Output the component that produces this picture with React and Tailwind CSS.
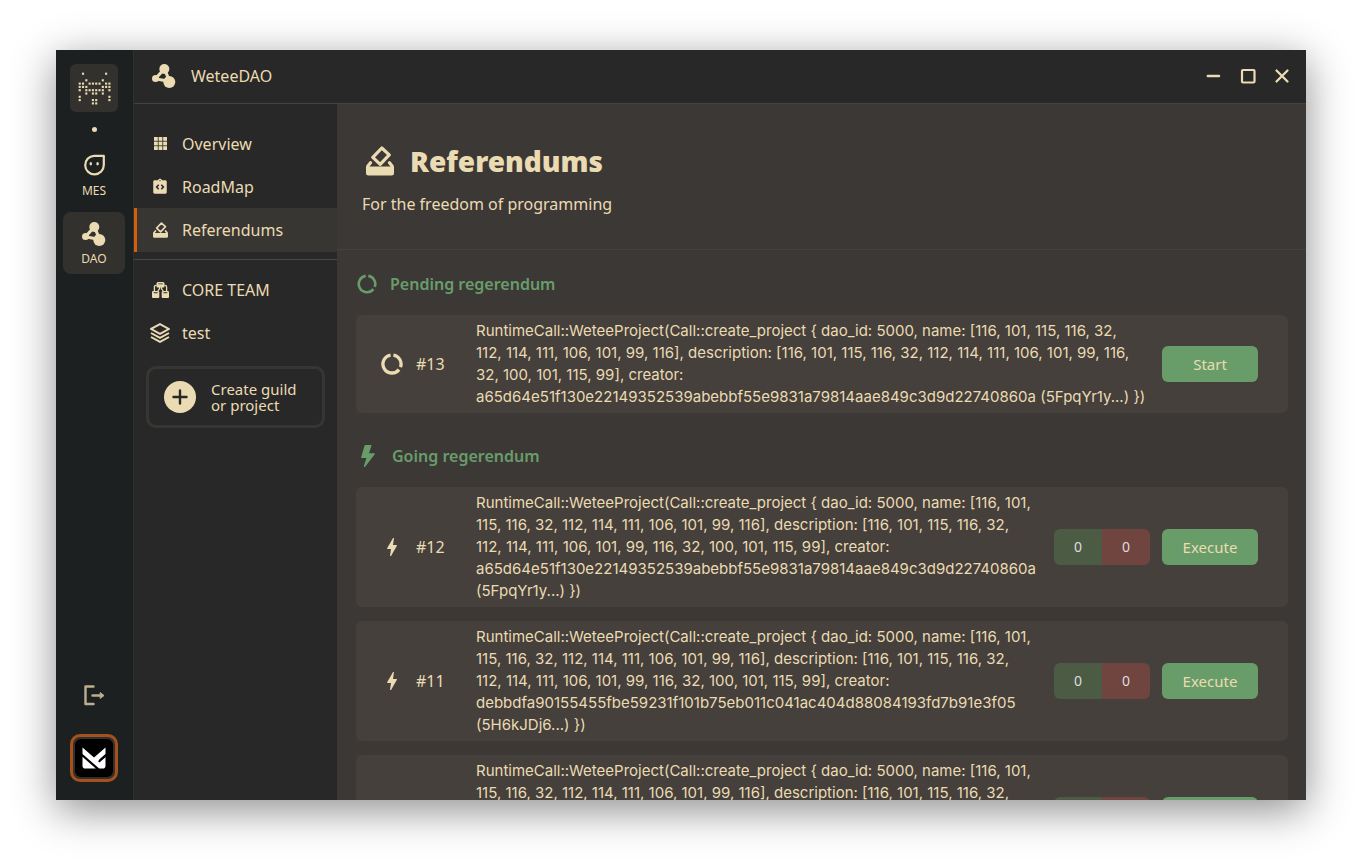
import React from "react";
import { BsLightningFill } from "react-icons/bs";
import { MdIntegrationInstructions, MdBolt } from "react-icons/md";
import { BiLayer } from "react-icons/bi";

const LOGO_ROWS = [
  [1, 8],
  [],
  [2, 7],
  [0, 1, 3, 4, 5, 6, 8, 9],
  [0, 1, 2, 7, 8, 9],
  [0, 2, 3, 4, 5, 6, 7, 9],
  [2, 4, 5, 7],
  [0, 9],
  [0, 4, 5, 9],
  [4, 5],
];

function PixelLogo() {
  return (
    <svg viewBox="0 0 100 100" className="size-[33px]" fill="currentColor" aria-hidden="true">
      {LOGO_ROWS.flatMap((row, y) =>
        row.map((x) => <rect key={`${x}-${y}`} x={x * 10 + 2} y={y * 10 + 2} width="6.4" height="6.4" />)
      )}
    </svg>
  );
}

function FaceIcon() {
  return (
    <svg viewBox="0 0 22 22" className="size-[22px]" fill="none" stroke="currentColor" strokeWidth="2.2" aria-hidden="true">
      <path d="M11 1.8H20.8V11A9.3 9.3 0 1 1 11 1.8Z" strokeLinejoin="round" />
      <ellipse cx="7.8" cy="9.8" rx="1.3" ry="1.8" fill="currentColor" stroke="none" />
      <ellipse cx="14.6" cy="9.8" rx="1.3" ry="1.8" fill="currentColor" stroke="none" />
    </svg>
  );
}

function NodesIcon() {
  return (
    <svg viewBox="0 0 24 24" className="size-6" fill="currentColor" aria-hidden="true">
      <circle cx="12.3" cy="5" r="5" />
      <circle cx="3.5" cy="14.5" r="3.5" />
      <circle cx="17.3" cy="18" r="6" />
      <path d="M10 7.5 4.5 13.5M4.5 15l9.5 1.8M13.8 8l2.4 6" fill="none" stroke="currentColor" strokeWidth="3.2" />
    </svg>
  );
}

function GridIcon() {
  return (
    <svg viewBox="0 0 13 13" className="size-[13px]" fill="currentColor" aria-hidden="true">
      {[0, 4.6, 9.2].flatMap((y) => [0, 4.6, 9.2].map((x) => <rect key={`${x}-${y}`} x={x} y={y} width="3.8" height="3.8" />))}
    </svg>
  );
}

function VoteIcon({ className }) {
  return (
    <svg viewBox="0 0 28 30" className={className} fill="none" stroke="currentColor" strokeLinejoin="round" strokeLinecap="round" aria-hidden="true">
      <path d="M15.8 2 23.2 8.9 14.2 18.4 6.8 11.3Z" strokeWidth="3.2" />
      <path d="M4.5 16.8 1.8 20.3M23.5 16.8l2.7 3.5" strokeWidth="3.2" />
      <path d="M0 20.5H28V27a2.5 2.5 0 0 1-2.5 2.5h-23A2.5 2.5 0 0 1 0 27Z" fill="currentColor" stroke="none" />
    </svg>
  );
}

function TeamIcon() {
  return (
    <svg viewBox="0 0 17 16" className="h-4 w-[17px]" fill="currentColor" aria-hidden="true">
      <path fillRule="evenodd" d="M6 0h5q1.500 0 1.500 1.500V4.500q0 1-1 1h-6q-1 0-1-1V1.500Q4.500 0 6 0ZM6.200 1.400v.9h4.600v-.9Z" />
      <path d="M4.500 3.400H4Q2.400 3.400 2.400 5v4M12.500 3.400h.5q1.600 0 1.600 1.600v4M7.500 5v1.800L5.800 8.800M9.500 5v1.800l1.700 2" fill="none" stroke="currentColor" strokeWidth="1.300" />
      <path fillRule="evenodd" d="M1.300 9H6q1.300 0 1.300 1.300V15q0 1-1 1H1q-1 0-1-1v-4.700Q0 9 1.300 9ZM1.700 10.300v.9h3.900v-.9ZM11 9h4.700Q17 9 17 10.300V15q0 1-1 1h-5.300q-1 0-1-1v-4.700Q9.700 9 11 9Zm.4 1.300v.9h3.900v-.9Z" />
    </svg>
  );
}

function RingIcon({ className, width }) {
  return (
    <svg viewBox="0 0 20 20" className={className} fill="none" stroke="currentColor" strokeWidth={width} aria-hidden="true">
      <path d="M11.3 1.9A8.2 8.2 0 0 1 17.7 12.9M16.4 15.1A8.2 8.2 0 1 1 8.7 1.9" />
    </svg>
  );
}

function LogoutIcon() {
  return (
    <svg viewBox="0 0 22 22" className="size-[22px]" fill="none" stroke="currentColor" strokeWidth="2.4" strokeLinejoin="round" strokeLinecap="round" aria-hidden="true">
      <path d="M10.5 2.5H2.5v17.500h8M9.5 11.5H18.5" />
      <path d="M17.5 8.8 21 11.5 17.5 14.2Z" fill="currentColor" strokeWidth="1" />
    </svg>
  );
}

function AvatarMark() {
  return (
    <svg viewBox="0 0 24 22" className="h-[22px] w-6" fill="#fff" aria-hidden="true">
      <path d="M.5.6 12 10.6 23.5.6v6.4L17.3 12.6v2.2L23.5 9.6v9.2q0 2.800-2.800 2.800h-3.500L.5 7Z" />
      <path d="M.5 9.8 13.8 21.6H3.3Q.5 21.6.5 18.8Z" />
      <path d="M23.5 7.3 16 14.2l1.400 1.400 6.100-5.400Z" fill="#000" />
    </svg>
  );
}

const NAV = [
  { label: "Overview", icon: <GridIcon /> },
  { label: "RoadMap", icon: <MdIntegrationInstructions className="size-[18px]" /> },
  { label: "Referendums", icon: <VoteIcon className="h-4 w-[15px]" />, active: true },
];

const TEAMS = [
  { label: "CORE TEAM", icon: <TeamIcon /> },
  { label: "test", icon: <BiLayer className="size-6" /> },
];

const GOING_HEAD = `RuntimeCall::WeteeProject(Call::create_project { dao_id: 5000, name: [116, 101,
115, 116, 32, 112, 114, 111, 106, 101, 99, 116], description: [116, 101, 115, 116, 32,
112, 114, 111, 106, 101, 99, 116, 32, 100, 101, 115, 99], creator:
`;

const PENDING = [
  {
    id: 13,
    call: `RuntimeCall::WeteeProject(Call::create_project { dao_id: 5000, name: [116, 101, 115, 116, 32,
112, 114, 111, 106, 101, 99, 116], description: [116, 101, 115, 116, 32, 112, 114, 111, 106, 101, 99, 116,
32, 100, 101, 115, 99], creator:
a65d64e51f130e22149352539abebbf55e9831a79814aae849c3d9d22740860a (5FpqYr1y...) })`,
  },
];

const GOING = [
  { id: 12, call: `${GOING_HEAD}a65d64e51f130e22149352539abebbf55e9831a79814aae849c3d9d22740860a\n(5FpqYr1y...) })` },
  { id: 11, call: `${GOING_HEAD}debbdfa90155455fbe59231f101b75eb011c041ac404d88084193fd7b91e3f05\n(5H6kJDj6...) })` },
  { id: 10, call: `${GOING_HEAD}debbdfa90155455fbe59231f101b75eb011c041ac404d88084193fd7b91e3f05\n(5H6kJDj6...) })` },
];

function NavItem({ item }) {
  return (
    <a
      href="#"
      aria-current={item.active ? "page" : undefined}
      className={
        item.active
          ? "flex h-11 items-center border-l-3 border-[#d65d0e] bg-[#383632]"
          : "flex h-[43px] items-center border-l-3 border-transparent"
      }
    >
      <span className="ml-[11px] flex w-6 justify-center">{item.icon}</span>
      <span className="ml-[10px]">{item.label}</span>
    </a>
  );
}

function SectionTitle({ icon, children }) {
  return (
    <h2 className="flex h-6 items-center gap-3 font-semibold text-[#689d6a]">
      <span className="flex min-w-[22px] justify-center">{icon}</span>
      {children}
    </h2>
  );
}

function Card({ item, icon, votes, action }) {
  return (
    <article className="flex items-center rounded-md bg-[#45403c] py-[5px] pr-[30px] pl-6 text-[15px] leading-[22px]">
      <span className="flex w-6 shrink-0 justify-center">{icon}</span>
      <span className="ml-3 w-[60px] shrink-0 text-base">#{item.id}</span>
      <p className="min-w-0 flex-1 font-['Inter',sans-serif] wrap-break-word whitespace-pre-line">{item.call}</p>
      {votes && (
        <div className="ml-3 flex h-9 w-24 shrink-0 overflow-hidden rounded-md text-sm text-[#dddddd]">
          <span className="flex flex-1 items-center justify-center bg-[#4c5b43]">0</span>
          <span className="flex flex-1 items-center justify-center bg-[#70453f]">0</span>
        </div>
      )}
      <button type="button" className="ml-3 h-9 w-24 shrink-0 rounded-md bg-[#689d6a]">
        {action}
      </button>
    </article>
  );
}

export default function App() {
  return (
    <div className="h-screen bg-white px-14 pt-[50px] pb-[62px] font-['Noto_Sans',sans-serif] text-base text-[#ebdbb2]">
      <div className="flex h-full bg-[#282828] shadow-[0_10px_40px_rgba(0,0,0,0.45)]">
        <aside className="flex w-[78px] shrink-0 flex-col items-center border-r border-[#32302f] bg-[#1d2021] pt-[14px] pr-px pb-[18px] text-xs">
          <button type="button" aria-label="Home" className="flex size-12 items-center justify-center rounded-md bg-[#32312e]">
            <PixelLogo />
          </button>
          <span className="mt-[15px] size-[5px] rounded-full bg-[#ebdbb2]" />
          <a href="#" className="mt-[11px] flex size-[62px] flex-col items-center justify-end gap-[7px] pb-[6px]">
            <FaceIcon />
            MES
          </a>
          <a href="#" className="mt-[7px] flex size-[62px] flex-col items-center justify-end gap-[5px] rounded-lg bg-[#32312e] pb-[7px]">
            <NodesIcon />
            DAO
          </a>
          <button type="button" aria-label="Log out" className="mt-auto text-[#bdae8d]">
            <LogoutIcon />
          </button>
          <button type="button" aria-label="Account" className="mt-7 flex size-12 items-center justify-center rounded-[10px] border-3 border-[#a5511b] bg-[#32302f]">
            <span className="flex size-[38px] items-center justify-center rounded-md bg-black">
              <AvatarMark />
            </span>
          </button>
        </aside>

        <div className="flex min-w-0 flex-1 flex-col">
          <header className="flex h-[54px] shrink-0 items-center border-b border-[#45423f] pr-4 pb-px pl-[18px]">
            <NodesIcon />
            <span className="ml-[15px]">WeteeDAO</span>
            <div className="ml-auto flex gap-[18px]">
              <button type="button" aria-label="Minimize">
                <svg viewBox="0 0 16 16" className="size-4" stroke="currentColor" strokeWidth="2.5" strokeLinecap="round" aria-hidden="true">
                  <path d="M1.8 8h11.2" />
                </svg>
              </button>
              <button type="button" aria-label="Maximize">
                <svg viewBox="0 0 16 16" className="size-4" fill="none" stroke="currentColor" strokeWidth="2.2" aria-hidden="true">
                  <rect x="2" y="2" width="12.5" height="12.5" rx="1" />
                </svg>
              </button>
              <button type="button" aria-label="Close">
                <svg viewBox="0 0 16 16" className="size-4" stroke="currentColor" strokeWidth="2.3" strokeLinecap="round" aria-hidden="true">
                  <path d="M2.5 2.5l11 11m0-11-11 11" />
                </svg>
              </button>
            </div>
          </header>

          <div className="flex min-h-0 flex-1">
            <nav className="w-[203px] shrink-0 pt-[18px]">
              {NAV.map((item) => (
                <NavItem key={item.label} item={item} />
              ))}
              <hr className="mt-[7px] mb-2 border-[#4a4845]" />
              {TEAMS.map((item) => (
                <NavItem key={item.label} item={item} />
              ))}
              <button type="button" className="mx-3 mt-3 flex h-[62px] w-[179px] items-center rounded-[10px] border-3 border-[#383632] pl-[15px] text-left text-[15px] leading-4">
                <span className="flex size-8 shrink-0 items-center justify-center rounded-full bg-[#ebdbb2] text-[#282828]">
                  <svg viewBox="0 0 16 16" className="size-4" stroke="currentColor" strokeWidth="2.4" strokeLinecap="round" aria-hidden="true">
                    <path d="M8 1.5v13M1.5 8h13" />
                  </svg>
                </span>
                <span className="ml-[15px]">
                  Create guild
                  <br />
                  or project
                </span>
              </button>
            </nav>

            <main className="min-w-0 flex-1 overflow-y-auto bg-[#3c3836] [scrollbar-width:none]">
              <div className="h-[146px] border-b border-[#45413e] pt-[35px] pl-[25px]">
                <h1 className="flex h-11 items-center text-[28px] font-black">
                  <VoteIcon className="mx-1 h-[30px] w-7" />
                  <span className="ml-3">Referendums</span>
                </h1>
                <p className="mt-[9px]">For the freedom of programming</p>
              </div>

              <section className="px-[18px] pt-[22px] pl-[19px]">
                <SectionTitle icon={<RingIcon className="size-5" width="2.6" />}>Pending regerendum</SectionTitle>
                <div className="mt-[19px] flex flex-col gap-[14px]">
                  {PENDING.map((item) => (
                    <Card key={item.id} item={item} icon={<RingIcon className="size-[22px]" width="3" />} action="Start" />
                  ))}
                </div>
              </section>

              <section className="px-[18px] pt-[31px] pl-[19px]">
                <SectionTitle icon={<BsLightningFill className="h-[22px] w-6" />}>Going regerendum</SectionTitle>
                <div className="mt-[19px] flex flex-col gap-[14px]">
                  {GOING.map((item) => (
                    <Card key={item.id} item={item} votes icon={<MdBolt className="size-6" />} action="Execute" />
                  ))}
                </div>
              </section>
            </main>
          </div>
        </div>
      </div>
    </div>
  );
}
